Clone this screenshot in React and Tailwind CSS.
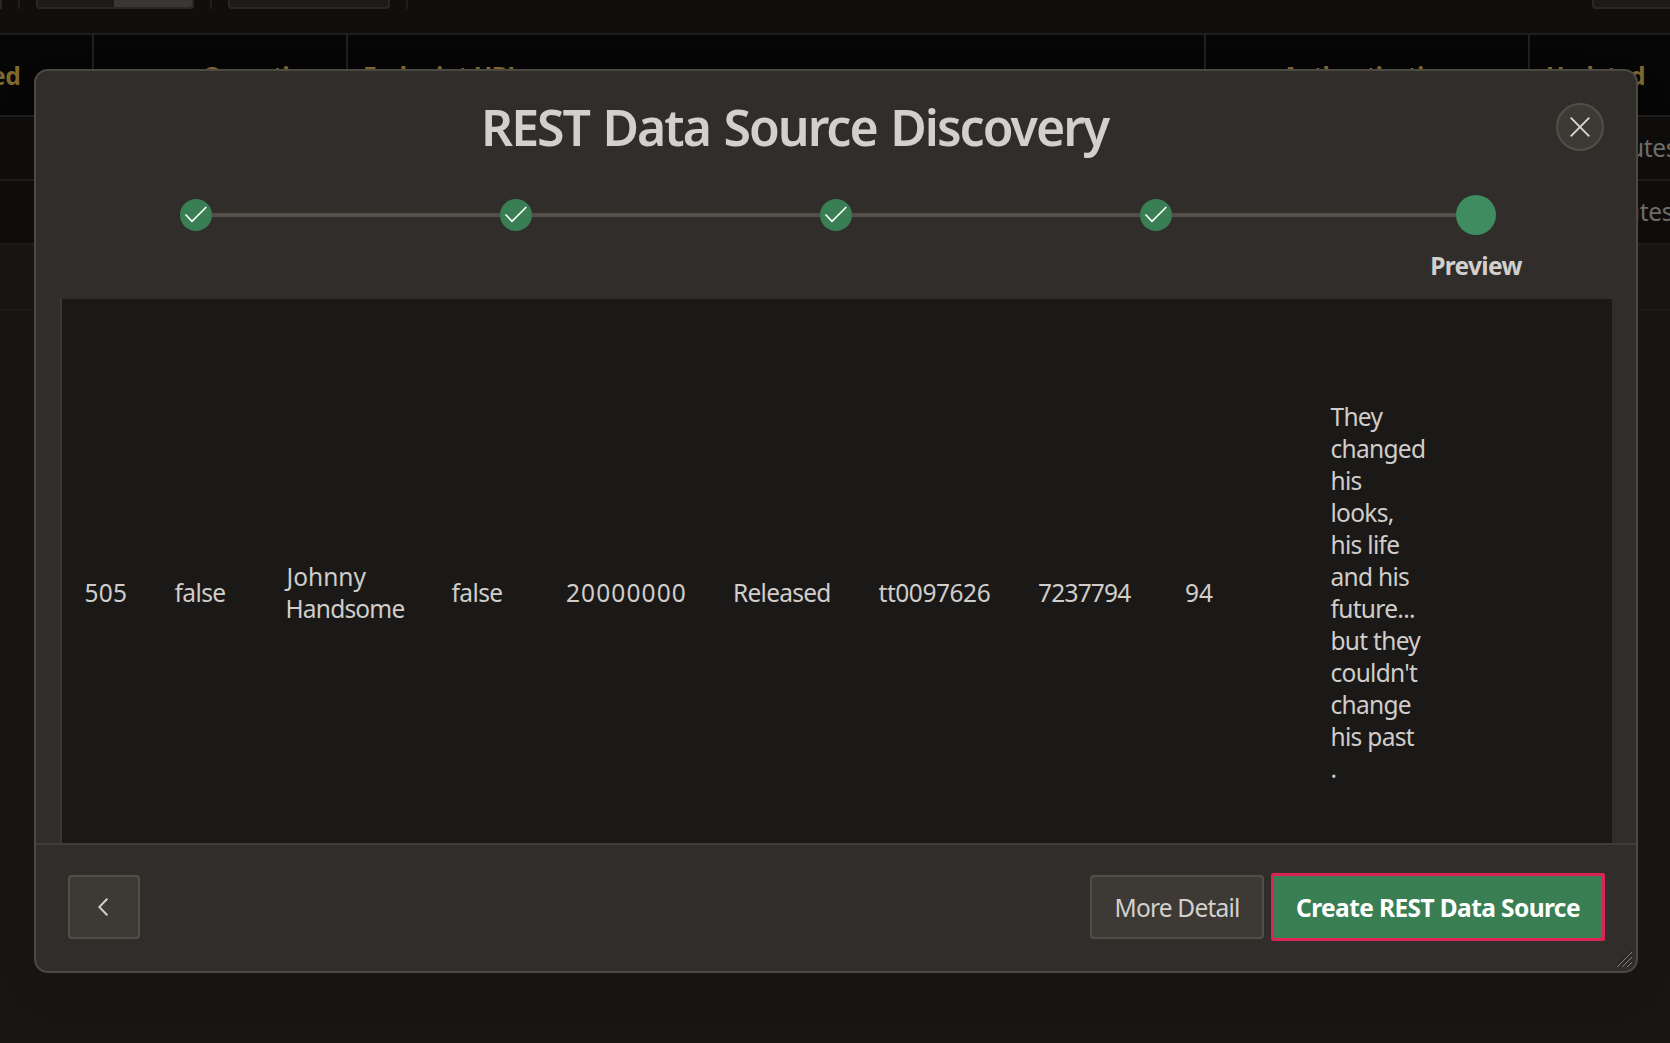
const HEADERS = [
  { label: "ed", className: "w-[94px] border-r-2", text: "-ml-[9px] tracking-[-0.5px]" },
  { label: "Operation", className: "w-[254px] border-r-2", text: "ml-[108.5px] tracking-[-0.9px]" },
  { label: "Endpoint URL", className: "w-[858px] border-r-2", text: "ml-[15px] tracking-[-0.6px]" },
  { label: "Authentication", className: "w-[324px] border-r-2", text: "ml-[76px] tracking-[-1px]" },
  { label: "Updated", className: "w-[140px]", text: "ml-[16px] tracking-[-0.9px]" },
];

const ROW = [
  { value: ["505"], className: "w-[90px] tracking-[0.2px]" },
  { value: ["false"], className: "w-[111px] tracking-[-0.6px]" },
  { value: ["Johnny", "Handsome"], className: "w-[166px] tracking-[-0.8px]" },
  { value: ["false"], className: "w-[114.5px] tracking-[-0.6px]" },
  { value: ["20000000"], className: "w-[167px] tracking-[1.1px]" },
  { value: ["Released"], className: "w-[145.5px] tracking-[-0.75px]" },
  { value: ["tt0097626"], className: "w-[159.5px] tracking-[-0.45px]" },
  { value: ["7237794"], className: "w-[147px] tracking-[-0.8px]" },
  { value: ["94"], className: "w-[145.5px]" },
  {
    value: ["They", "changed", "his", "looks,", "his life", "and his", "future...", "but they", "couldn't", "change", "his past", "."],
    className: "w-[140px] tracking-[-0.7px]",
  },
];

function Backdrop() {
  return (
    <div className="flex h-full flex-col">
      <div className="flex h-[35px] shrink-0 items-start border-b-2 border-[#1f1d1b] bg-[#100f0d]">
        <div className="h-[9px] w-[2px] bg-[#292725]" />
        <div className="ml-4 h-[9px] w-[2px] bg-[#1f1e1c]" />
        <div className="ml-4 flex h-[9px] w-[158px] overflow-hidden rounded-b border-x-2 border-b-2 border-[#2a2826]">
          <div className="flex-1 bg-[#1d1b19]" />
          <div className="w-[78px] bg-[#3a3634]" />
        </div>
        <div className="ml-4 h-[9px] w-[2px] bg-[#1f1e1c]" />
        <div className="ml-4 h-[9px] w-[162px] rounded-b border-x-2 border-b-2 border-[#2a2826] bg-[#1d1b19]" />
        <div className="ml-4 h-[9px] w-[2px] bg-[#1f1e1c]" />
        <div className="ml-auto h-[9px] w-[78px] rounded-bl border-b-2 border-l-2 border-[#2a2826] bg-[#1d1b19]" />
      </div>
      <div className="flex h-[82px] shrink-0 border-b-2 border-[#201e1c] bg-[#060606] font-bold text-[#80692e]">
        {HEADERS.map((h) => (
          <div key={h.label} className={"shrink-0 overflow-hidden whitespace-nowrap border-[#201f1e] pt-[24.5px] " + h.className}>
            <div className={h.text}>{h.label}</div>
          </div>
        ))}
      </div>
      {["46 minutes ago", "46 minutes ago"].map((t, i) => (
        <div key={i} className="flex h-16 shrink-0 border-b-2 border-[#1f1d1b] bg-[#0f0e0c] pl-[1546px] pt-[14.5px] text-[#706e6c]">
          <span className={i ? "ml-[2px] whitespace-nowrap tracking-[-0.3px]" : "ml-[6px] whitespace-nowrap tracking-[-0.3px]"}>{t}</span>
        </div>
      ))}
      <div className="h-[66px] shrink-0 border-b-2 border-[#1d1b19]" />
    </div>
  );
}

function Check() {
  return (
    <svg viewBox="0 0 32 32" className="size-8 shrink-0">
      <circle cx="16" cy="16" r="16" fill="#3a7f54" />
      <path d="M5.5 15.5 L12 22.3 L26.3 8" fill="none" stroke="#fff" strokeWidth="1.6" />
    </svg>
  );
}

function Steps() {
  return (
    <div className="flex h-10 items-center pl-36">
      {[0, 1, 2, 3].map((i) => (
        <div key={i} className={i === 3 ? "flex w-[316px] items-center" : "flex w-80 items-center"}>
          <Check />
          <div className="h-1 flex-1 bg-[#55514a]" />
        </div>
      ))}
      <div className="size-10 shrink-0 rounded-full bg-[#3e8c5f]" />
    </div>
  );
}

export default function App() {
  return (
    <div className="relative h-[1043px] w-[1670px] overflow-hidden bg-[#181613] font-['Noto_Sans',sans-serif] text-[24.5px] leading-8">
      <Backdrop />
      <div
        role="dialog"
        className="absolute left-[34px] top-[69px] flex h-[904px] w-[1604px] flex-col overflow-hidden rounded-[14px] border-2 border-[#4c4842] bg-[#312d2a] text-[#d2d0cd] shadow-[0_16px_48px_rgba(0,0,0,0.06)]"
      >
        <header className="flex h-[124px] shrink-0 items-start justify-between pl-[445px] pr-8 pt-8">
          <h1 className="-mt-[6px] whitespace-nowrap text-[50px] font-semibold leading-[60px] tracking-[-2px] [word-spacing:2.5px]">REST Data Source Discovery</h1>
          <button className="flex size-12 items-center justify-center rounded-full border-2 border-[#524e48] bg-[#3d3a35]">
            <svg viewBox="0 0 20 20" className="size-5">
              <path d="M.7.7 19.3 19.3M19.3.7.7 19.3" stroke="#d8d5d2" strokeWidth="1.9" fill="none" />
            </svg>
          </button>
        </header>
        <Steps />
        <div className="flex h-16 shrink-0 justify-end pr-[110px] pt-[14.5px]">
          <div className="w-[100px] text-center font-bold tracking-[-0.65px]">Preview</div>
        </div>
        <main className="ml-6 mr-6 h-[544px] shrink-0 overflow-hidden border-l-2 border-[#3c3835] bg-[#1b1917]">
          <div className="flex h-[587px] items-center pl-[22.5px] text-[#d0cdca]">
            {ROW.map((c, i) => (
              <div key={i} className={"shrink-0 whitespace-nowrap " + c.className}>
                {c.value.map((line) => (
                  <div key={line} className={line === "Johnny" ? "ml-[1px] tracking-[0px]" : undefined}>{line}</div>
                ))}
              </div>
            ))}
          </div>
        </main>
        <footer className="relative flex flex-1 items-start border-t-2 border-[#403c38] px-8 pt-[27px]">
          <button className="mt-[3px] flex h-16 w-[72px] items-center justify-center rounded border-2 border-[#524e47] bg-[#3d3a35]">
            <svg viewBox="0 0 10 18" className="-ml-0.5 h-[18px] w-2.5">
              <path d="M9.3.7 1.3 9l8 8.3" stroke="#d2d0cd" strokeWidth="2" fill="none" />
            </svg>
          </button>
          <button className="ml-auto mt-[3px] h-16 w-[174px] rounded border-2 border-[#524e47] bg-[#3d3a35] pt-0.5 tracking-[-0.8px]">More Detail</button>
          <button className="-mr-px ml-[7px] mt-px h-[68px] w-[334px] whitespace-nowrap rounded-[2px] border-3 border-[#db2355] bg-[#3a7f54] pt-0.5 font-bold tracking-[-0.6px] text-white">
            Create REST Data Source
          </button>
          <svg viewBox="0 0 16 16" className="absolute bottom-1 right-1 size-4">
            <path d="M1 16 16 1M6 16 16 6M11 16 16 11" stroke="#8b8884" strokeWidth="1" fill="none" />
            <path d="M-.2 16 16-.2M4.8 16 16 4.8M9.8 16 16 9.8" stroke="#1c1a18" strokeWidth="1" fill="none" />
          </svg>
        </footer>
      </div>
    </div>
  );
}
